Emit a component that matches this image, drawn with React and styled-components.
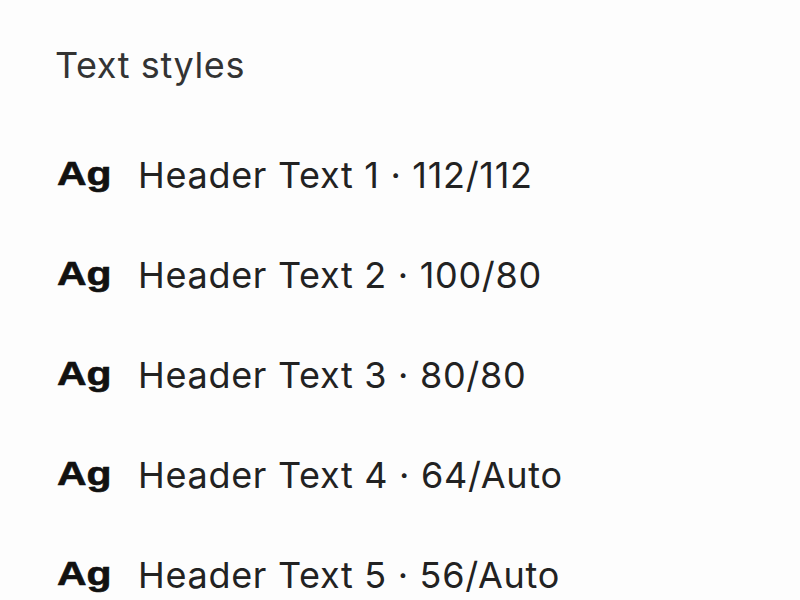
import styled, { createGlobalStyle } from "styled-components";

const Global = createGlobalStyle`
  body {
    margin: 0;
    background: #fdfdfd;
    font-family: Inter, "Liberation Sans", sans-serif;
  }
`;

const Panel = styled.div`
  width: 800px;
  height: 600px;
  overflow: hidden;
  padding: 43px 0 0 55px;
  box-sizing: border-box;
`;

const Title = styled.h2`
  margin: 0 0 66px;
  font-size: 36px;
  font-weight: 400;
  letter-spacing: 0.6px;
  color: #333;
  line-height: 44px;
`;

const List = styled.div`
  display: flex;
  flex-direction: column;
  gap: 56px;
`;

const Row = styled.div`
  height: 44px;
  line-height: 44px;
  white-space: nowrap;
`;

const Sample = styled.span`
  display: inline-block;
  width: 81px;
  margin-left: 2px;
  font-family: "Liberation Sans", Arial, sans-serif;
  font-weight: 700;
  font-size: 33px;
  color: #111;
  -webkit-text-stroke: 0.6px #111;
  vertical-align: 3px;
  line-height: 33px;
  transform: scaleX(1.24);
  transform-origin: left center;
`;

const Label = styled.span`
  font-size: 36px;
  letter-spacing: 0.7px;
  color: #222;
`;

const styles = [
  ["Header Text 1", "112/112"],
  ["Header Text 2", "100/80"],
  ["Header Text 3", "80/80"],
  ["Header Text 4", "64/Auto"],
  ["Header Text 5", "56/Auto"],
];

export default function App() {
  return (
    <>
      <Global />
      <Panel>
        <Title>Text styles</Title>
        <List>
          {styles.map(([name, size]) => (
            <Row key={name}>
              <Sample>Ag</Sample>
              <Label>
                {name} · {size}
              </Label>
            </Row>
          ))}
        </List>
      </Panel>
    </>
  );
}
